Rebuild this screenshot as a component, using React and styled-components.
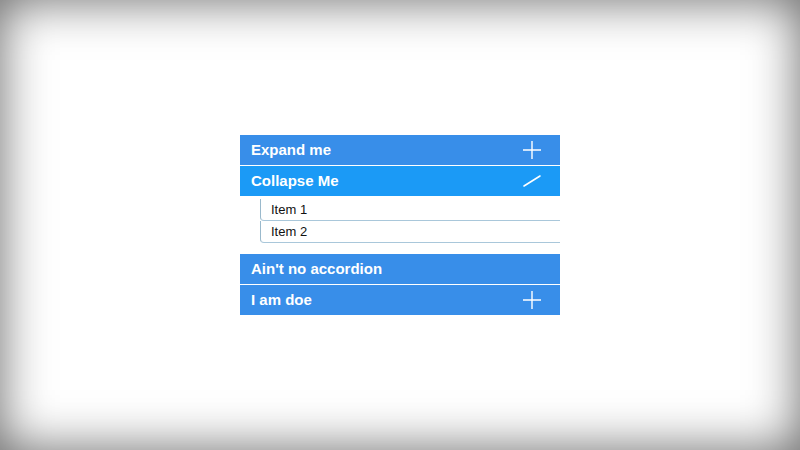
import React from 'react';
import styled, { createGlobalStyle } from 'styled-components';

const Global = createGlobalStyle`
  html, body { margin: 0; padding: 0; }
  body {
    background: #fff;
    font-family: "Liberation Sans", Arial, sans-serif;
  }
`

const Page = styled.div`
  width: 100vw;
  height: 100vh;
  display: flex;
  align-items: center;
  justify-content: center;
  box-shadow: inset 0 0 50px rgba(0, 0, 0, 0.6);
`

const Accordion = styled.div`
  width: 320px;
  display: flex;
  flex-direction: column;
`

const Header = styled.div`
  height: 30px;
  margin-bottom: 1px;
  padding: 0 10px 0 11px;
  display: flex;
  align-items: center;
  justify-content: space-between;
  background: ${(props) => props.open ? '#1b9af6' : '#388ee9'};
  color: #fff;
  font-size: 15px;
  font-weight: bold;
`

const Panel = styled.div`
  padding: 2px 0 11px 20px;
`

const Item = styled.div`
  height: 21px;
  padding-left: 10px;
  display: flex;
  align-items: center;
  border-left: 1px solid #9ab9cc;
  border-bottom: 1px solid #a9c7da;
  border-bottom-left-radius: 4px;
  font-size: 13px;
  color: #111;
`

const IconBox = styled.svg`
  width: 20px;
  height: 20px;
  margin-right: 8px;
`

function Plus() {
  return <IconBox viewBox="0 0 20 20">
    <path d="M10 1v18M1 10h18" stroke="#fff" strokeWidth="1.4" />
  </IconBox>
}

function Slash() {
  return <IconBox viewBox="0 0 20 20">
    <path d="M2 15L18 5" stroke="#fff" strokeWidth="1.6" strokeLinecap="round" />
  </IconBox>
}

export default function App() {
  return <>
    <Global />
    <Page>
      <Accordion>
        <Header>Expand me<Plus /></Header>
        <Header open>Collapse Me<Slash /></Header>
        <Panel>
          <Item>Item 1</Item>
          <Item>Item 2</Item>
        </Panel>
        <Header>Ain't no accordion</Header>
        <Header>I am doe<Plus /></Header>
      </Accordion>
    </Page>
  </>
}
